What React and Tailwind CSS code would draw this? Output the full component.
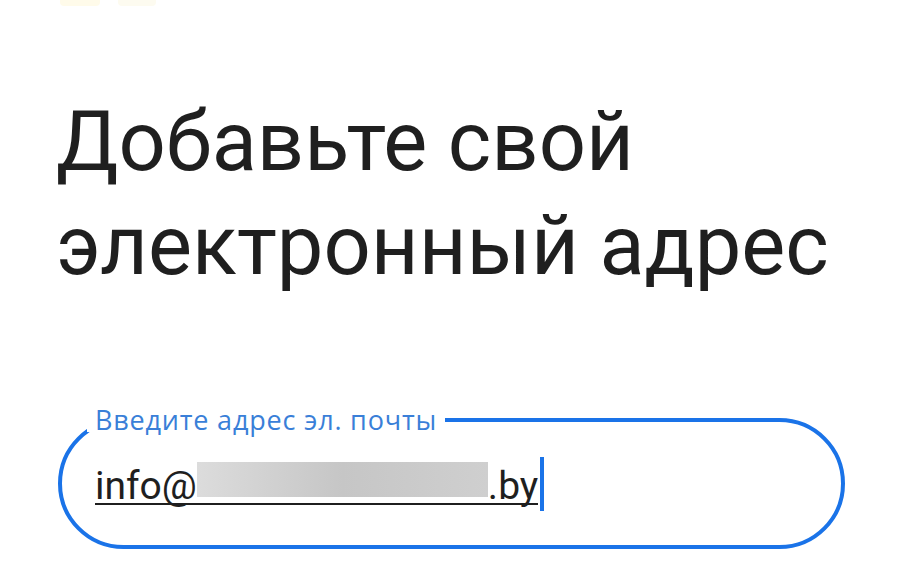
export default function App() {
  return (
    <div className="w-[900px] h-[580px] bg-white overflow-hidden relative" style={{ fontFamily: 'Roboto, "Noto Sans", sans-serif' }}>
      <div className="flex gap-[18px] pl-[60px] h-[8px]">
        <div className="w-[40px] h-[6px] rounded-b bg-[#fffbea]" />
        <div className="w-[38px] h-[6px] rounded-b bg-[#fdfbf0]" />
      </div>
      <div className="pl-[56px] pt-[82px]">
        <h1 className="text-[83px] leading-[104px] text-[#1f1f1f] font-normal">
          Добавьте свой<br />электронный адрес
        </h1>
      </div>
      <div className="pl-[58px] pr-[55px] pt-[110px]">
        <fieldset className="border-[4px] border-[#1a73e8] rounded-full h-[141px] pl-[25px] pr-[20px]">
          <legend
            className="px-[8px] text-[27px] leading-[24px] tracking-[0.8px] text-[#3a7fd8]"
            style={{ fontFamily: '"Open Sans", Roboto, sans-serif' }}
          >
            Введите адрес эл. почты
          </legend>
          <div className="flex items-start pt-[25px] pl-[8px]">
            <div className="flex items-end mt-[5px] border-b-[2px] border-[#1f1f1f] text-[39px] leading-[34px] text-[#1f1f1f]">
              <span>info@</span>
              <span className="w-[291px] h-[35px] mb-[6px] bg-linear-to-r from-[#dcdcdc] via-[#c6c6c6] to-[#cfcfcf]" />
              <span>.by</span>
            </div>
            <div className="w-[4px] h-[54px] bg-[#1a73e8] ml-[2px]" />
          </div>
        </fieldset>
      </div>
    </div>
  );
}
